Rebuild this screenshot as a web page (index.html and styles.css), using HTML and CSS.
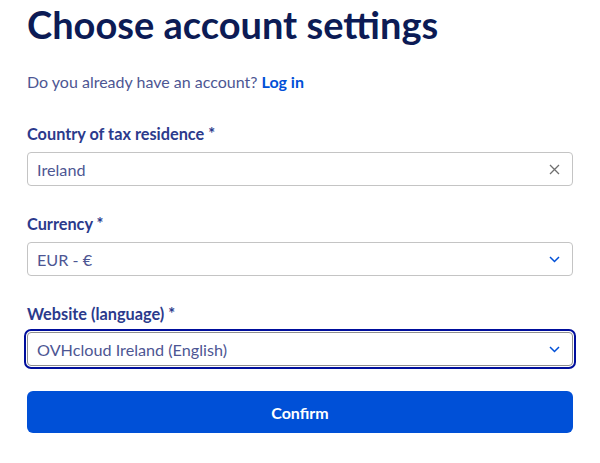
FILE: index.html
```html
<!DOCTYPE html>
<html lang="en">
<head>
<meta charset="utf-8">
<title>Choose account settings</title>
<link rel="stylesheet" href="styles.css">
</head>
<body>
<main class="page">
  <h1 class="title">Choose account settings</h1>
  <p class="intro">Do you already have an account? <a class="link" href="#">Log in</a></p>
  <div class="fields">
    <div class="field">
      <label class="label">Country of tax residence *</label>
      <div class="input">
        <span class="value">Ireland</span>
        <svg class="icon-x" width="11" height="11" viewBox="0 0 11 11"><path d="M1 1L10 10M10 1L1 10" stroke="#6f6f6f" stroke-width="1.3" fill="none"/></svg>
      </div>
    </div>
    <div class="field">
      <label class="label">Currency *</label>
      <div class="input">
        <span class="value">EUR - €</span>
        <svg class="icon-chev" width="11" height="7" viewBox="0 0 11 7"><path d="M1 1L5.5 5.5L10 1" stroke="#0050d7" stroke-width="1.5" fill="none"/></svg>
      </div>
    </div>
    <div class="field">
      <label class="label">Website (language) *</label>
      <div class="input input-focus">
        <span class="value">OVHcloud Ireland (English)</span>
        <svg class="icon-chev" width="11" height="7" viewBox="0 0 11 7"><path d="M1 1L5.5 5.5L10 1" stroke="#0050d7" stroke-width="1.5" fill="none"/></svg>
      </div>
    </div>
  </div>
  <button class="confirm" type="button">Confirm</button>
</main>
</body>
</html>
```
FILE: styles.css
```css
* { box-sizing: border-box; }
html, body { margin: 0; background: #ffffff; }
body { font-family: Lato, "Open Sans", sans-serif; }
.page {
  display: flex;
  flex-direction: column;
  padding: 1px 27px 0 27px;
  width: 600px;
}
.title {
  margin: 0;
  font-size: 38px;
  line-height: 46px;
  font-weight: 700;
  color: #0c1b55;
}
.intro {
  margin: 25px 0 0 0;
  font-size: 16px;
  line-height: 20px;
  color: #4d5693;
}
.link {
  color: #0050d7;
  font-weight: 700;
  text-decoration: none;
}
.fields {
  display: flex;
  flex-direction: column;
  gap: 28px;
  margin-top: 32px;
}
.field {
  display: flex;
  flex-direction: column;
  gap: 8px;
}
.label {
  font-size: 16.3px;
  line-height: 20px;
  font-weight: 700;
  color: #2b3a8c;
}
.input {
  height: 34px;
  border: 1px solid #c4c4c4;
  border-radius: 4px;
  padding: 0 12px 0 9px;
  display: flex;
  align-items: center;
  justify-content: space-between;
}
.input-focus {
  border-color: #8f8f8f;
  outline: 2px solid #000e9c;
  outline-offset: 1px;
}
.value {
  font-size: 16.2px;
  color: #4d5693;
}
.confirm {
  margin-top: 25px;
  height: 42px;
  border: none;
  border-radius: 6px;
  background: #0050d7;
  color: #ffffff;
  font-family: Lato, "Open Sans", sans-serif;
  font-size: 16px;
  font-weight: 700;
}
```
